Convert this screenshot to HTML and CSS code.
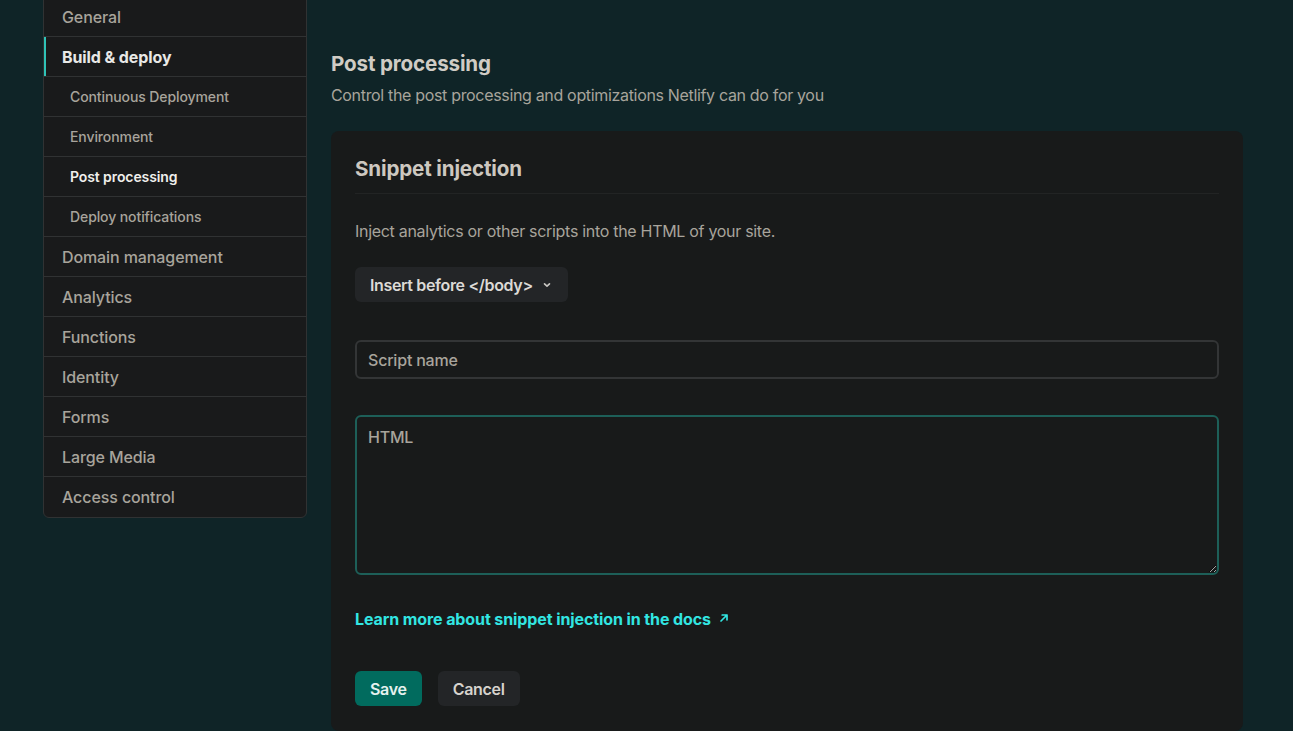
FILE: index.html
```html
<!DOCTYPE html>
<html lang="en">
<head>
<meta charset="utf-8">
<title>Post processing</title>
<link rel="stylesheet" href="styles.css">
</head>
<body>
<div class="layout">
  <nav class="sidebar">
    <a class="nav-item">General</a>
    <a class="nav-item active">Build &amp; deploy</a>
    <a class="nav-item sub">Continuous Deployment</a>
    <a class="nav-item sub">Environment</a>
    <a class="nav-item sub current">Post processing</a>
    <a class="nav-item sub">Deploy notifications</a>
    <a class="nav-item">Domain management</a>
    <a class="nav-item">Analytics</a>
    <a class="nav-item">Functions</a>
    <a class="nav-item">Identity</a>
    <a class="nav-item">Forms</a>
    <a class="nav-item">Large Media</a>
    <a class="nav-item last">Access control</a>
  </nav>
  <main class="main">
    <h1 class="page-title">Post processing</h1>
    <p class="page-desc">Control the post processing and optimizations Netlify can do for you</p>
    <section class="card">
      <h2 class="card-title">Snippet injection</h2>
      <p class="card-desc">Inject analytics or other scripts into the HTML of your site.</p>
      <button class="dropdown">Insert before &lt;/body&gt;
        <svg class="chev" width="10" height="10" viewBox="0 0 10 10"><path d="M2.5 3.8 L5 6.2 L7.5 3.8" fill="none" stroke="currentColor" stroke-width="1.6" stroke-linecap="round" stroke-linejoin="round"/></svg>
      </button>
      <input class="field" type="text" placeholder="Script name">
      <textarea class="field area" placeholder="HTML"></textarea>
      <a class="doc-link">Learn more about snippet injection in the docs <svg class="arrow" width="12" height="12" viewBox="0 0 12 12"><path d="M3 9 L9 3 M4.2 3 H9 V7.8" fill="none" stroke="currentColor" stroke-width="1.7" stroke-linecap="round" stroke-linejoin="round"/></svg></a>
      <div class="actions">
        <button class="btn primary">Save</button>
        <button class="btn secondary">Cancel</button>
      </div>
    </section>
  </main>
</div>
</body>
</html>
```
FILE: styles.css
```css
* { box-sizing: border-box; }
html, body {
  margin: 0;
  padding: 0;
  background: #0f2427;
  height: 100%;
  overflow: hidden;
}
body {
  font-family: Inter, "Noto Sans", "Liberation Sans", sans-serif;
  color: #a8a49c;
}
.layout {
  display: flex;
  align-items: flex-start;
  gap: 24px;
  padding-left: 43px;
  margin-top: -4px;
}
.sidebar {
  width: 264px;
  flex: none;
  background: #191a1b;
  border: 1px solid #303233;
  border-radius: 0 0 6px 6px;
  display: flex;
  flex-direction: column;
}
.nav-item {
  display: flex;
  align-items: center;
  height: 40px;
  padding-left: 18px;
  font-size: 16px;
  font-weight: 500;
  color: #a8a49c;
  border-bottom: 1px solid #303233;
  letter-spacing: -0.1px;
}
.nav-item.last { border-bottom: none; height: 40px; }
.nav-item.active {
  color: #e8e8e6;
  font-weight: 700;
  box-shadow: inset 2px 0 0 #2fc3b7;
}
.nav-item.sub {
  padding-left: 26px;
  font-size: 14px;
}
.nav-item.current {
  color: #f0efec;
  font-weight: 600;
}
.main {
  width: 912px;
  padding-top: 54px;
}
.page-title {
  margin: 0;
  font-size: 20.6px;
  font-weight: 700;
  color: #d0ccc5;
  line-height: 28px;
  letter-spacing: -0.15px;
}
.page-desc {
  margin: 5px 0 0;
  font-size: 16px;
  line-height: 24px;
  color: #a8a49c;
  letter-spacing: -0.33px;
}
.card {
  margin-top: 24px;
  background: #181a1a;
  border-radius: 8px;
  padding: 24px 24px 25px;
  display: flex;
  flex-direction: column;
  align-items: flex-start;
}
.card-title {
  margin: 0;
  width: 100%;
  font-size: 20.6px;
  font-weight: 700;
  line-height: 28px;
  color: #cdc8c0;
  padding-bottom: 10px;
  border-bottom: 1px solid #222424;
  letter-spacing: -0.15px;
}
.card-desc {
  margin: 25px 0 0;
  font-size: 16px;
  line-height: 24px;
  color: #a8a49c;
  letter-spacing: -0.3px;
}
.dropdown {
  margin-top: 24px;
  display: flex;
  align-items: center;
  gap: 8px;
  height: 35px;
  padding: 0 16px 0 15px;
  background: #232527;
  border: none;
  border-radius: 6px;
  font-family: inherit;
  font-size: 16px;
  font-weight: 600;
  color: #dcdad6;
  letter-spacing: -0.35px;
}
.chev { color: #c8c6c2; margin-left: 1px; }
.field {
  width: 100%;
  margin-top: 38px;
  height: 39px;
  padding: 0 11px;
  background: #181a1a;
  border: 2px solid #333536;
  border-radius: 6px;
  font-family: inherit;
  font-size: 16px;
  font-weight: 500;
  color: #dcdad6;
  outline: none;
  letter-spacing: -0.2px;
}
.field::placeholder { color: #a8a49c; opacity: 1; }
.field.area {
  margin-top: 36px;
  height: 160px;
  padding: 10px 11px;
  border-color: #1d5f58;
  resize: vertical;
  line-height: 20px;
}
.doc-link {
  margin-top: 34px;
  display: flex;
  align-items: center;
  gap: 7px;
  font-size: 16px;
  font-weight: 700;
  color: #32e6e2;
  letter-spacing: -0.1px;
}
.arrow { margin-top: -2px; }
.actions {
  margin-top: 42px;
  display: flex;
  gap: 16px;
}
.btn {
  height: 35px;
  border: none;
  border-radius: 6px;
  font-family: inherit;
  font-size: 16px;
  font-weight: 600;
  padding: 0 15px;
  letter-spacing: -0.3px;
}
.btn.primary { background: #016b5e; color: #e6f2ef; }
.btn.secondary { background: #232527; color: #d6d3cd; }
```
